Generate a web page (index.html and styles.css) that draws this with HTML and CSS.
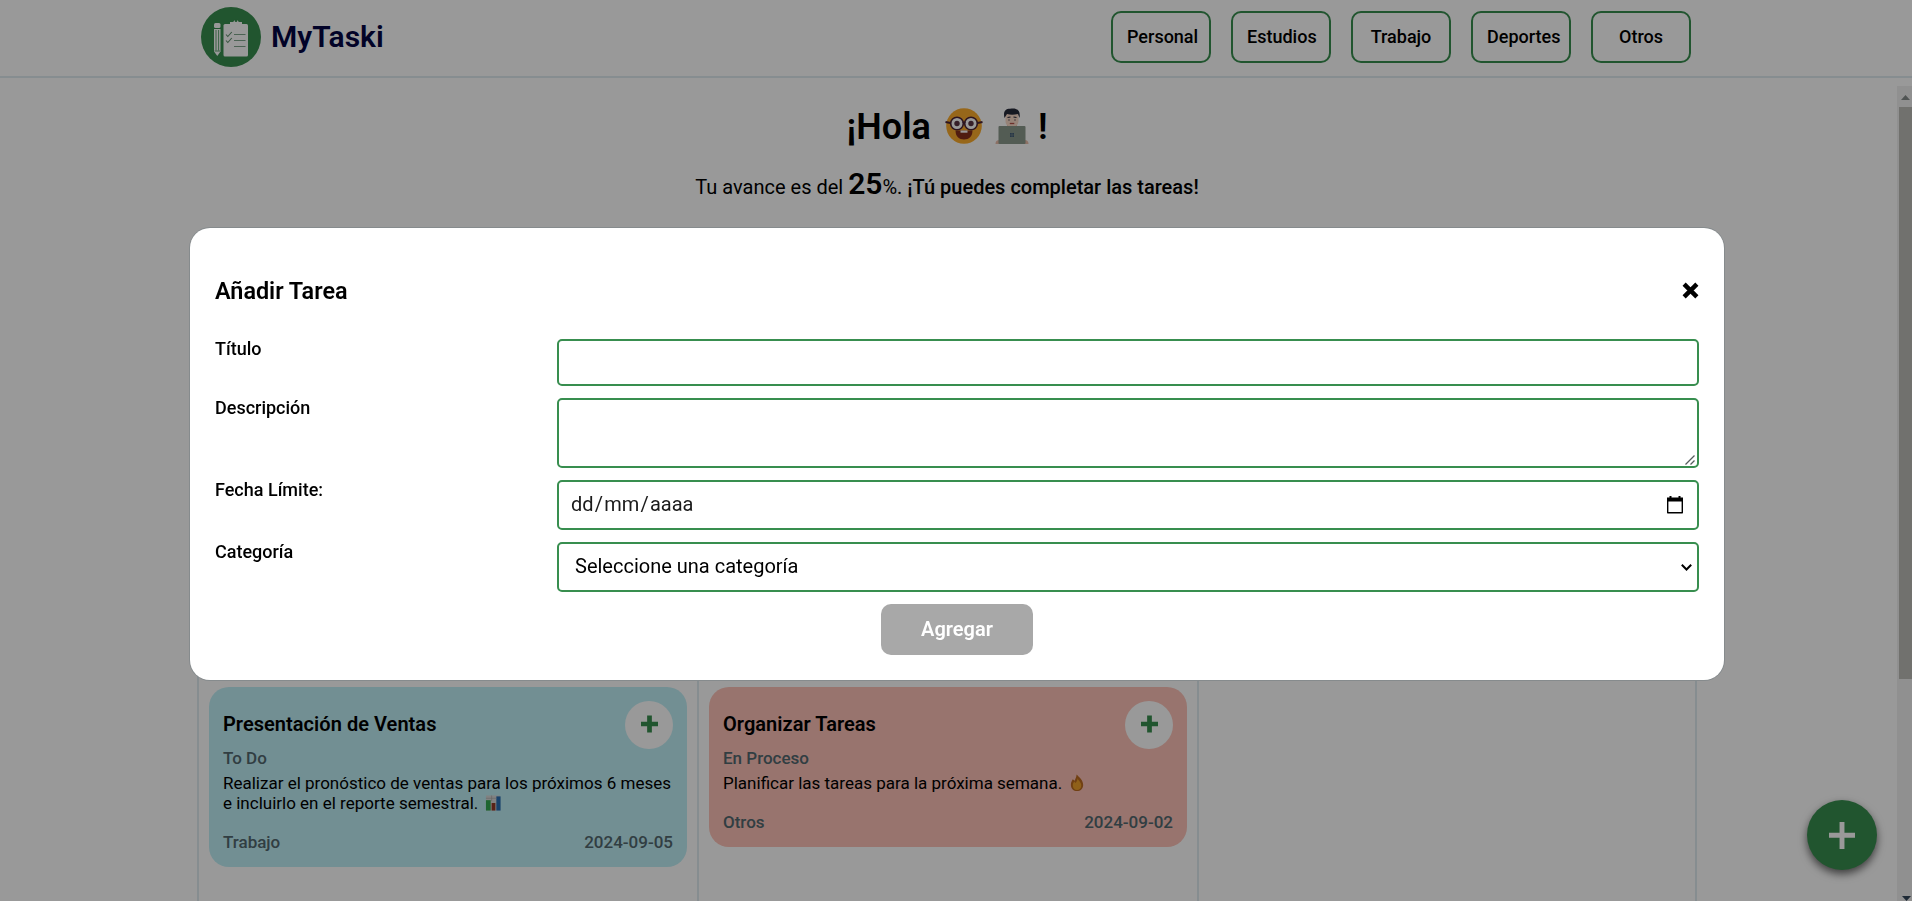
FILE: index.html
```html
<!DOCTYPE html>
<html lang="es">
<head>
<meta charset="utf-8">
<title>MyTaski</title>
<link rel="stylesheet" href="styles.css">
</head>
<body>
<header class="topbar">
  <div class="brand">
    <svg class="logo" viewBox="0 0 60 60">
      <circle cx="30" cy="30" r="30" fill="#388e4f"/>
      <path d="M29 17v-2h3.200a3 3 0 0 1 5.600 0H41v2z" fill="#fff"/>
      <circle cx="35" cy="13.700" r="1.300" fill="#388e4f"/>
      <rect x="22.500" y="17" width="24.500" height="32.500" rx="1.500" fill="#fff"/>
      <path d="M29 16.500h12" stroke="#fff" stroke-width="2"/>
      <path d="m25 27.500 1.800 2 4-4.500m-5.800 8.500 1.800 2 4-4.500" fill="none" stroke="#5f8f6e" stroke-width="1.100"/>
      <path d="M33 27.500h11.500M33 33.500h11.500M33 39.500h11.500" stroke="#7fa58c" stroke-width="1.200"/>
      <rect x="13" y="16" width="6.500" height="5" rx="1.500" fill="#fff"/>
      <path d="M13 22h6.500v22.500l-3.200 4.500L13 44.500z" fill="#fff"/>
      <path d="M15 23v20.500M17.600 23v20.500M13.500 44h5.500" stroke="#388e4f" stroke-width=".8"/>
    </svg>
    <span class="brand-name">MyTaski</span>
  </div>
  <nav class="filters">
    <button class="filter">Personal</button>
    <button class="filter">Estudios</button>
    <button class="filter">Trabajo</button>
    <button class="filter">Deportes</button>
    <button class="filter">Otros</button>
  </nav>
</header>

<div class="page">
  <main class="content">
    <h1 class="hello">
      <span>¡Hola</span>
      <svg class="nerd" viewBox="0 0 38 38">
        <circle cx="19" cy="19" r="17.800" fill="#fcac2c"/>
        <path d="M10.500 23.500h17c0 6-3.500 9-8.500 9s-8.500-3-8.500-9z" fill="#86301c"/>
        <path d="M15.500 23.500h7v2.200h-7z" fill="#fff"/>
        <circle cx="12" cy="16.500" r="6.300" fill="#fff" stroke="#4b2336" stroke-width="1.600"/>
        <circle cx="26" cy="16.500" r="6.300" fill="#fff" stroke="#4b2336" stroke-width="1.600"/>
        <path d="M.5 15l5 1M37.500 15l-5 1M18 16q1-1 2 0" fill="none" stroke="#4b2336" stroke-width="2"/>
        <circle cx="12" cy="16.500" r="2.700" fill="#5b3545"/>
        <circle cx="26" cy="16.500" r="2.700" fill="#5b3545"/>
      </svg>
      <svg class="coder" viewBox="0 0 34 36">
        <path d="M12 15h10v5H12z" fill="#e9bca9"/>
        <path d="M10.500 6h13v7c0 4-3 6-6.500 6s-6.500-2-6.500-6z" fill="#fbdac9"/>
        <path d="M9.500 10C8 4 10 .8 15 .8c6-1.500 11 1 9.500 9.200l-1.500-4c-4 1-8 1-11 0z" fill="#272a3a"/>
        <path d="M12.500 9.500l3-.5m3 0 3 .5M14 11.500v1m6-1v1" stroke="#272a3a" stroke-width="1.200"/>
        <path d="M14.800 15.500h4.500" stroke="#b4534a" stroke-width="1.300"/>
        <path d="M.5 36q0-4 4-4h25q4 0 4 4z" fill="#e9bca9"/>
        <rect x="3.500" y="18" width="27" height="18" rx="1" fill="#8b9a8c"/>
        <path d="M15 25h4v4h-4z" fill="#405b77"/>
        <path d="M17 25v4M15 27h4" stroke="#8b9a8c" stroke-width=".5"/>
      </svg>
      <span>!</span>
    </h1>
    <p class="progress">Tu avance es del <b class="percent">25</b>%. <span class="cheer">¡Tú puedes completar las tareas!</span></p>
    <section class="board">
      <div class="column">
        <article class="card card-blue">
          <div class="card-head">
            <h2 class="card-title">Presentación de Ventas</h2>
            <button class="card-add"><svg class="plus" viewBox="0 0 18 18"><path d="M9 0v18M0 9h18"/></svg></button>
          </div>
          <div class="status">To Do</div>
          <p class="text">Realizar el pronóstico de ventas para los próximos 6 meses e incluirlo en el reporte semestral.
            <svg class="emoji" viewBox="0 0 18 18"><path d="M1 1h15v16H1z" fill="#d7d9d9"/><path d="M1 6h5v11H1z" fill="#31a950"/><path d="M7 9h4v8H7z" fill="#943b28"/><path d="M12 2h4.500v15H12z" fill="#296eb4"/><path d="M1 4h11M7 1v6" stroke="#aaa" stroke-width=".7"/></svg>
          </p>
          <div class="card-foot"><span>Trabajo</span><span>2024-09-05</span></div>
        </article>
      </div>
      <div class="column">
        <article class="card card-pink">
          <div class="card-head">
            <h2 class="card-title">Organizar Tareas</h2>
            <button class="card-add"><svg class="plus" viewBox="0 0 18 18"><path d="M9 0v18M0 9h18"/></svg></button>
          </div>
          <div class="status">En Proceso</div>
          <p class="text">Planificar las tareas para la próxima semana.
            <svg class="emoji" viewBox="0 0 18 18"><path d="M8 0c3 3 7 6 7 11 0 4-3 6.500-6.500 6.500S2 15 2 11c0-3 1-4 2-6l2 1.500C7 4 8 2 8 0z" fill="#bc6b20"/><path d="M9 4c1 3 4 4 4 7.500s-2 5-4.500 5-4.500-2-4.500-5c0-2 1-3 1.500-4L7 9c1-1 2-3 2-5z" fill="#efa02a"/></svg>
          </p>
          <div class="card-foot"><span>Otros</span><span>2024-09-02</span></div>
        </article>
      </div>
      <div class="column"></div>
    </section>
  </main>
  <div class="scrollbar">
    <svg class="arrow" viewBox="0 0 15 21"><path d="M4 14l4.500-5 4.500 5z" fill="#858c8b"/></svg>
    <div class="thumb"></div>
  </div>
</div>
<button class="fab"><svg class="fab-plus" viewBox="0 0 26 27"><path d="M13 0v27M0 13.200h26"/></svg></button>
<svg class="arrow-down" viewBox="0 0 9 5"><path d="M0 0h9L4.500 5z"/></svg>

<div class="overlay">
  <form class="modal">
    <div class="modal-head">
      <h2 class="modal-title">Añadir Tarea</h2>
      <svg class="close" viewBox="0 0 16 16"><path d="M2 2l12 12M14 2 2 14"/></svg>
    </div>
    <div class="fields">
      <label class="label">Título</label>
      <input class="field field-title" type="text">
      <label class="label">Descripción</label>
      <div class="stack">
        <textarea class="field field-text"></textarea>
        <svg class="grip" viewBox="0 0 10 10"><path d="M.5 9.500l9-9M5.500 9.500l4-4"/></svg>
      </div>
      <label class="label">Fecha Límite:</label>
      <div class="field field-date">
        <span class="date-parts"><span>dd</span><span>/</span><span>mm</span><span>/</span><span>aaaa</span></span>
        <svg class="calendar" viewBox="0 0 16 18"><path d="M.7 3.500h14.600v13.300H.7z" fill="none" stroke="#000" stroke-width="1.400" stroke-linejoin="round"/><path d="M0 1.500h16V5.500H0zM2.500 0h2v2h-2zM11.500 0h2v2h-2z"/></svg>
      </div>
      <label class="label">Categoría</label>
      <div class="stack">
        <select class="field field-select"><option>Seleccione una categoría</option></select>
        <svg class="chevron" viewBox="0 0 11 7"><path d="M.8 .8 5.500 5.500 10.200 .8"/></svg>
      </div>
    </div>
    <button class="submit" type="button">Agregar</button>
  </form>
</div>
</body>
</html>
```
FILE: styles.css
```css
* { box-sizing: border-box; }
html, body { height: 100%; overflow: hidden; }
body {
  margin: 0;
  background: #fff;
  color: #000;
  font-family: Roboto, "Liberation Sans", sans-serif;
}
button { font-family: inherit; padding: 0; border: 0; }
h1, h2, p { margin: 0; }

.topbar {
  display: flex;
  justify-content: space-between;
  height: 78px;
  padding: 7px 221px 0 201px;
  border-bottom: 2px solid #dfebf0;
}
.brand { display: flex; gap: 10px; height: 60px; }
.logo { width: 60px; height: 60px; }
.brand-name { color: #040644; font-size: 30px; font-weight: 600; line-height: 59px; }
.filters { display: flex; gap: 20px; padding-top: 4px; }
.filter {
  width: 100px;
  height: 52px;
  padding: 0 14px 2px;
  border: 2px solid #388e4f;
  border-radius: 10px;
  background: #fff;
  color: #000;
  font-size: 18px;
  font-weight: 500;
}

.page { display: flex; height: 823px; padding-top: 8px; }
.content { flex: 1; display: flex; flex-direction: column; align-items: center; padding-right: 3px; }
.hello {
  display: flex;
  align-items: center;
  height: 82px;
  font-size: 36px;
  font-weight: 600;
}
.nerd { width: 38px; height: 38px; margin-left: 14px; margin-top: -2px; }
.coder { width: 34px; height: 36px; margin: -2px 9px 0 12px; }
.progress { margin-top: -4px; font-size: 20px; line-height: 40px; white-space: nowrap; }
.percent { font-size: 30px; font-weight: 600; }
.cheer { font-weight: 500; }

.board {
  display: grid;
  grid-template-columns: 500px 500px 500px;
  flex: 1;
  width: 1500px;
  margin-top: 30px;
  border-right: 2px solid #dfebf0;
}
.column { border-left: 2px solid #dfebf0; padding: 450px 10px 0; }
.card { padding: 14px; border-radius: 20px; }
.card-blue { height: 180px; background: #bfeff6; }
.card-pink { height: 160px; background: #fdc2b7; }
.card-head { display: flex; justify-content: space-between; align-items: center; height: 48px; }
.card-title { font-size: 20px; font-weight: 600; line-height: 24px; letter-spacing: .04px; margin-top: -2px; }
.card-add {
  display: grid;
  place-items: center;
  width: 48px;
  height: 48px;
  border-radius: 50%;
  background: #fff;
}
.plus { width: 17px; height: 18px; margin-top: -2px; fill: none; stroke: #388e4f; stroke-width: 5; }
.status { margin-top: -1px; color: #52686f; font-size: 17px; font-weight: 500; line-height: 20px; }
.text { margin-top: 5px; font-size: 17px; line-height: 20px; }
.emoji { width: 17px; height: 18px; margin: 0 0 -3px 3px; }
.card-foot {
  display: flex;
  justify-content: space-between;
  margin-top: 19px;
  color: #52686f;
  font-size: 17px;
  font-weight: 500;
  line-height: 20px;
}

.scrollbar { width: 15px; background: #f1f1f1; }
.arrow { display: block; width: 15px; height: 21px; }
.thumb { height: 572px; margin-left: 2px; background: #bcbcb8; }
.arrow-down { position: fixed; right: 1px; bottom: 0; width: 9px; height: 5px; fill: #33465a; }

.fab {
  position: fixed;
  left: 1807px;
  top: 800px;
  display: grid;
  place-items: center;
  width: 70px;
  height: 70px;
  border-radius: 50%;
  background: #388e4f;
  box-shadow: 0 4px 8px rgba(0, 0, 0, .6);
}
.fab-plus { width: 26px; height: 27px; fill: none; stroke: #fff; stroke-width: 4.900; }

.overlay {
  position: fixed;
  inset: 0;
  display: flex;
  justify-content: center;
  align-items: flex-start;
  padding: 228px 0 0 2px;
  background: rgba(0, 0, 0, .4);
}
.modal {
  display: flex;
  flex-direction: column;
  width: 1534px;
  height: 452px;
  padding: 25px;
  border-radius: 20px;
  background: #fff;
  box-shadow: 0 0 0 1px #868b8d;
}
.modal-head { display: flex; justify-content: space-between; align-items: center; height: 74px; }
.modal-title { margin-top: 2px; font-size: 23.400px; font-weight: 600; line-height: 28px; }
.close { width: 17px; height: 17px; fill: none; stroke: #000; stroke-width: 4.200; }
.fields { display: grid; grid-template-columns: 342px 1fr; row-gap: 12px; margin-top: 12px; }
.label { font-size: 18px; font-weight: 500; line-height: 20px; }
.stack { position: relative; }
.field {
  display: block;
  width: 100%;
  margin: 0;
  padding: 12px;
  border: 2px solid #388e4f;
  border-radius: 5px;
  background: #fff;
  color: #000;
  font-family: Roboto, "Liberation Sans", sans-serif;
  font-size: 20px;
}
.field-title { height: 47px; }
.field-text { height: 70px; resize: none; }
.grip {
  position: absolute;
  right: 4px;
  bottom: 3px;
  width: 10px;
  height: 10px;
  fill: none;
  stroke: #555d5d;
  stroke-width: 1.300;
}
.field-date {
  display: flex;
  justify-content: space-between;
  align-items: center;
  height: 50px;
  padding-bottom: 13px;
  color: #1b1b1b;
}
.date-parts { display: flex; gap: 1.200px; margin-top: -1px; }
.calendar { width: 16px; height: 18px; margin-right: 2px; }
.field-select { height: 50px; padding: 0 16px 2px; appearance: none; }
.chevron {
  position: absolute;
  right: 7px;
  top: 22px;
  width: 11px;
  height: 7px;
  fill: none;
  stroke: #000;
  stroke-width: 2;
}
.submit {
  align-self: center;
  width: 152px;
  height: 51px;
  margin-top: 12px;
  padding-bottom: 2px;
  border-radius: 10px;
  background: #a8a8a8;
  color: #fff;
  font-size: 20px;
  font-weight: 600;
}
```
